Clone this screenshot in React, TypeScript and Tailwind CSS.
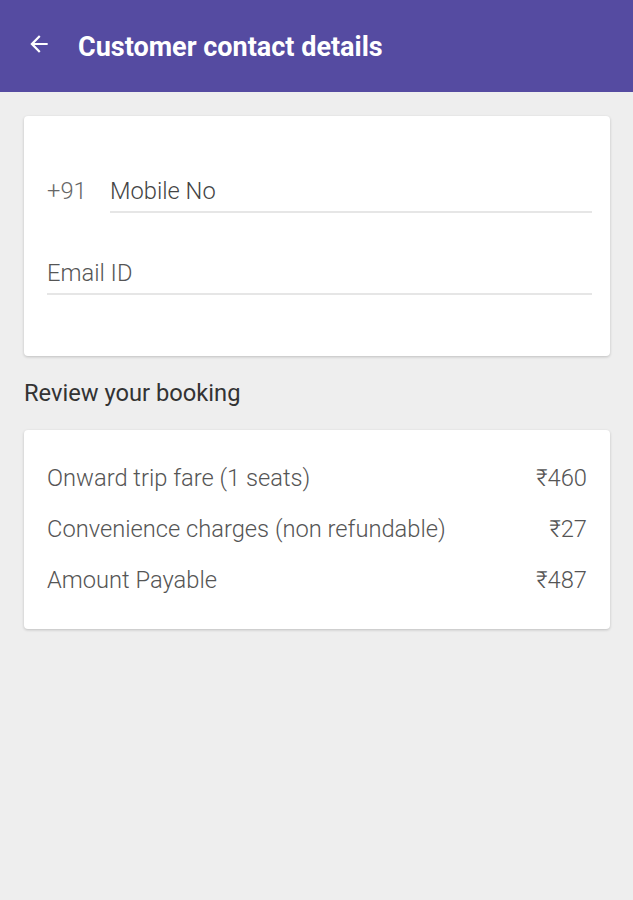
import React from "react";

export default function App() {
  return (
    <div className="min-h-[900px] w-full bg-[#eeeeee]" style={{ fontFamily: "Roboto, 'Liberation Sans', sans-serif" }}>
      <header className="h-[92px] bg-[#554ba1] flex items-center pl-[26px]">
        <svg width="26" height="26" viewBox="0 0 24 24" className="shrink-0 mb-[4px]">
          <path d="M20 11H7.83l5.59-5.59L12 4l-8 8 8 8 1.41-1.41L7.83 13H20v-2z" fill="#ffffff" />
        </svg>
        <h1 className="ml-[26px] mt-[3px] text-white font-bold text-[27px] leading-none">Customer contact details</h1>
      </header>

      <main className="px-[24px] pt-[24px] pr-[23px]">
        <section className="bg-white rounded-[4px] shadow-[0_1px_3px_rgba(0,0,0,0.2)] h-[240px] pl-[23px] pr-[18px] pt-[61px]">
          <div className="flex items-end">
            <span className="w-[63px] text-[23.7px] font-light text-[#666666] leading-[28px] pb-[8px]">+91</span>
            <div className="flex-1 border-b-2 border-[#e6e6e6] pb-[6px]">
              <span className="block text-[23.7px] font-light text-[#444444] leading-[28px]">Mobile No</span>
            </div>
          </div>
          <div className="mt-[46px] border-b-2 border-[#e6e6e6] pb-[6px]">
            <span className="block text-[23.7px] font-light text-[#555555] leading-[28px]">Email ID</span>
          </div>
        </section>

        <h2 className="mt-[23px] text-[23.7px] text-[#333333] leading-[28px]">Review your booking</h2>

        <section className="mt-[23px] bg-white rounded-[4px] shadow-[0_1px_3px_rgba(0,0,0,0.2)] h-[199px] pl-[23px] pr-[23px] pt-[34px] flex flex-col gap-[23px]">
          {[
            ["Onward trip fare (1 seats)", "₹460"],
            ["Convenience charges (non refundable)", "₹27"],
            ["Amount Payable", "₹487"],
          ].map(([l, r]) => (
            <div key={l} className="flex justify-between text-[23.7px] font-light text-[#555555] leading-[28px]">
              <span>{l}</span>
              <span>{r}</span>
            </div>
          ))}
        </section>
      </main>
    </div>
  );
}
